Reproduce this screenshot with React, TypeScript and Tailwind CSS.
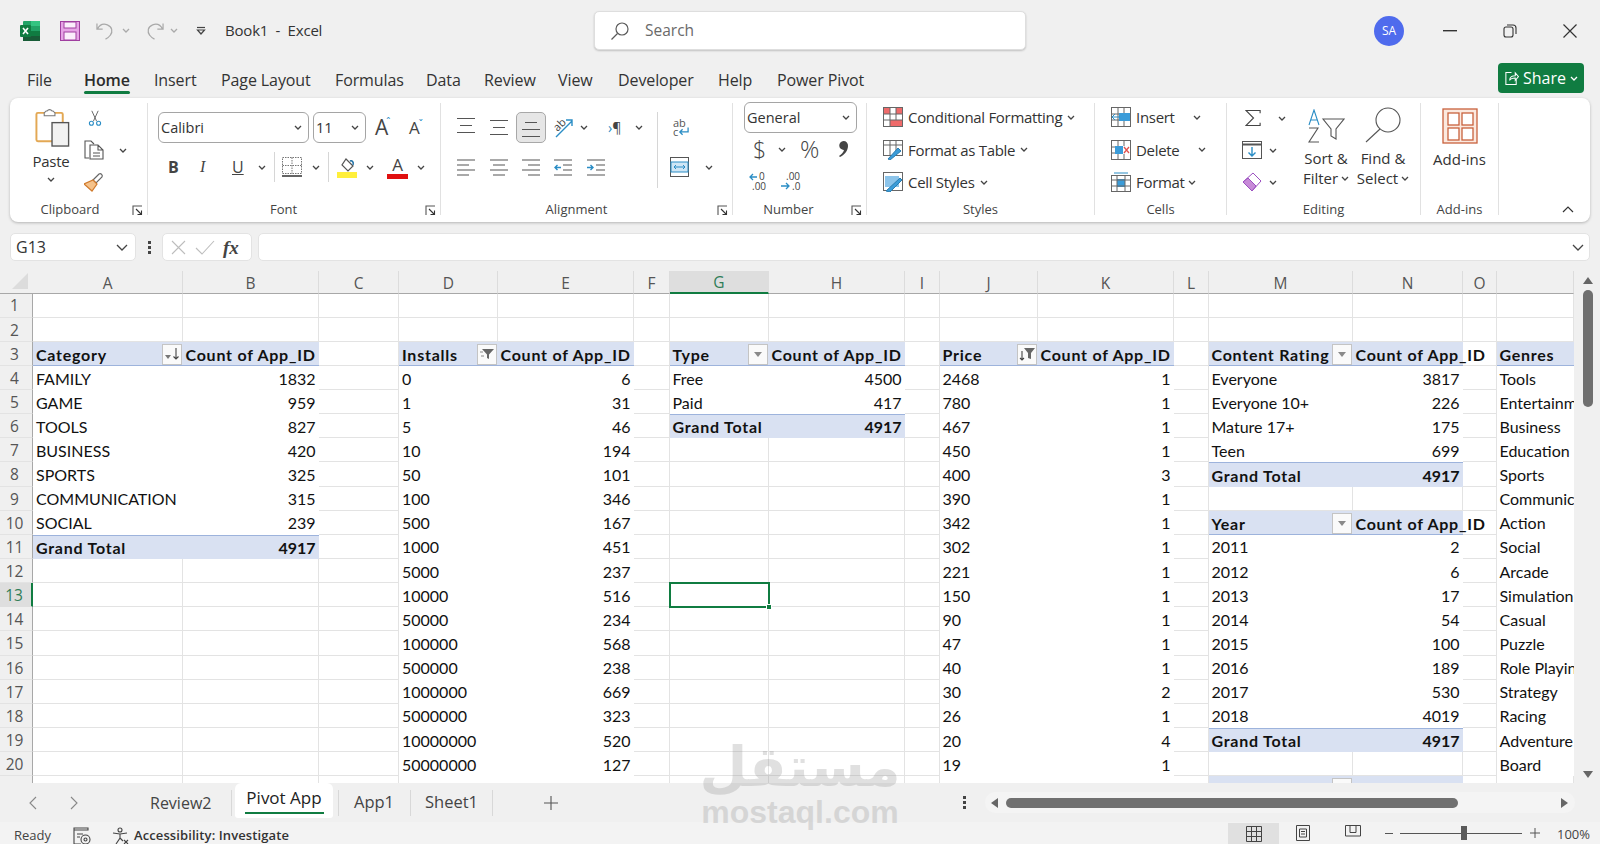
import React from "react";

const UI = "font-['Open_Sans','Noto_Sans',sans-serif]";

function Chev({ className = "" }: { className?: string }) {
  return (
    <svg viewBox="0 0 8 5" className={"w-[8px] h-[5px] shrink-0 " + className} fill="none" stroke="#444" strokeWidth="1.3">
      <path d="M1 1l3 3 3-3" />
    </svg>
  );
}

function Lines({ w = [18, 18, 18] }: { w?: number[] }) {
  return (
    <svg viewBox="0 0 18 17" className="w-[18px] h-[17px] shrink-0" stroke="#555" strokeWidth="1.2" fill="none">
      <path d={`M${(18 - w[0]) / 2} 1.5h${w[0]}M${(18 - w[1]) / 2} 8.5h${w[1]}M${(18 - w[2]) / 2} 15.5h${w[2]}`} />
    </svg>
  );
}

function AlignH({ kind }: { kind: "l" | "c" | "r" }) {
  const d =
    kind === "l"
      ? "M0 1h18M0 6h12M0 11h18M0 16h12"
      : kind === "c"
      ? "M0 1h18M3 6h12M0 11h18M3 16h12"
      : "M0 1h18M6 6h12M0 11h18M6 16h12";
  return (
    <svg viewBox="0 0 18 17" className="w-[18px] h-[17px] shrink-0" stroke="#555" strokeWidth="1.2" fill="none">
      <path d={d} />
    </svg>
  );
}

function Indent({ dir }: { dir: "l" | "r" }) {
  return (
    <svg viewBox="0 0 18 17" className="w-[18px] h-[17px] shrink-0" fill="none" strokeWidth="1.2">
      <path d="M0 1h18M9 6h9M9 11h9M0 16h18" stroke="#555" />
      <path d={dir === "l" ? "M7 8.5H1m2.5-2.5L1 8.5 3.5 11" : "M0 8.5h6M3.5 6L6 8.5 3.5 11"} stroke="#2a8dc5" strokeWidth="1.4" />
    </svg>
  );
}

function RibbonLabel({ children, pr = "", launcher = false }: { children: React.ReactNode; pr?: string; launcher?: boolean }) {
  return (
    <div className={"relative h-[26px] -mb-[8px] flex items-center justify-center text-[13px] text-[#444] " + pr}>
      {children}
      {launcher && (
        <svg viewBox="0 0 11 11" className="absolute right-[4px] top-[8px] w-[11px] h-[11px]" fill="none" stroke="#555" strokeWidth="1.1">
          <path d="M1 10V1h9" />
          <path d="M4 4l5.5 5.5M9.5 5.5v4h-4" stroke="#333" />
        </svg>
      )}
    </div>
  );
}

function Select({ w, h, text, className = "" }: { w: string; h: string; text: string; className?: string }) {
  return (
    <div className={`${w} ${h} ${className} shrink-0 border border-[#a5a5a5] rounded-[6px] bg-white flex items-center justify-between pl-[2px] pr-[6px] text-[14.5px] text-[#333]`}>
      <span>{text}</span>
      <Chev />
    </div>
  );
}

const tabsTop: [string, string][] = [
  ["File", "w-[57px]"],
  ["Home", "w-[70px]"],
  ["Insert", "w-[67px]"],
  ["Page Layout", "w-[114px]"],
  ["Formulas", "w-[91px]"],
  ["Data", "w-[58px]"],
  ["Review", "w-[74px]"],
  ["View", "w-[60px]"],
  ["Developer", "w-[100px]"],
  ["Help", "w-[59px]"],
  ["Power Pivot", "w-[100px]"],
];

function TitleBar() {
  return (
    <div className="h-[61px] flex items-center shrink-0">
      <div className="ml-[20px] w-[20px] h-[20px] relative shrink-0">
        <svg viewBox="0 0 20 20" className="w-[20px] h-[20px]">
          <rect x="3" y="0" width="17" height="20" rx="1" fill="#21a366" />
          <rect x="11" y="0" width="9" height="5" fill="#33c481" />
          <rect x="3" y="10" width="8" height="10" fill="#185c37" />
          <rect x="11" y="10" width="9" height="5" fill="#107c41" />
          <rect x="11" y="15" width="9" height="5" fill="#185c37" />
          <rect x="0" y="4" width="11" height="12" rx="1" fill="#107c41" />
          <path d="M3 7l5 6M8 7l-5 6" stroke="#fff" strokeWidth="1.6" />
        </svg>
      </div>
      <svg viewBox="0 0 20 20" className="ml-[20px] w-[20px] h-[20px] shrink-0">
        <rect x="0.5" y="0.5" width="19" height="19" fill="#e6a4e6" stroke="#a03fa0" />
        <rect x="4" y="1" width="12" height="6" fill="#fbeefb" stroke="#a03fa0" />
        <rect x="4" y="11" width="12" height="8" fill="#fbeefb" stroke="#a03fa0" />
      </svg>
      <svg viewBox="0 0 20 20" className="ml-[16px] w-[19px] h-[20px] shrink-0" fill="none" stroke="#a9a9a9" strokeWidth="1.3">
        <path d="M1 2v6h6M1.5 8C4 3 8 2 12 3.5c5 2 6 7 3 11-1 1.5-3 3-5 4" />
      </svg>
      <Chev className="ml-[7px] opacity-40" />
      <svg viewBox="0 0 20 20" className="ml-[15px] w-[19px] h-[20px] shrink-0" fill="none" stroke="#a9a9a9" strokeWidth="1.3">
        <path d="M19 2v6h-6M18.5 8C16 3 12 2 8 3.5c-5 2-6 7-3 11 1 1.5 3 3 5 4" />
      </svg>
      <Chev className="ml-[6px] opacity-40" />
      <svg viewBox="0 0 10 10" className="ml-[18px] w-[10px] h-[10px] shrink-0" fill="none" stroke="#444" strokeWidth="1.2">
        <path d="M1 1.5h8" />
        <path d="M1.5 4h7L5 8z" />
      </svg>
      <div className="ml-[19px] w-[110px] text-[15px] tracking-[-0.2px] text-[#333] whitespace-pre shrink-0">Book1  -  Excel</div>
      <div className="ml-[259px] w-[432px] h-[39px] shrink-0 bg-white rounded-[5px] border border-[#dedede] shadow-[0_1px_2px_rgba(0,0,0,0.2)] flex items-center">
        <svg viewBox="0 0 20 20" className="ml-[15px] w-[20px] h-[20px]" fill="none" stroke="#5a5a5a" strokeWidth="1.2">
          <circle cx="12" cy="8" r="6" />
          <path d="M7.5 12.5L1.5 18.5" />
        </svg>
        <span className="ml-[15px] text-[15.5px] text-[#6a6a6a]">Search</span>
      </div>
      <div className="ml-[348px] w-[30px] h-[30px] rounded-full bg-[#4f6bed] text-white text-[12px] flex items-center justify-center shrink-0">SA</div>
      <svg viewBox="0 0 14 2" className="ml-[39px] w-[14px] h-[2px] shrink-0">
        <rect width="14" height="1.4" fill="#333" />
      </svg>
      <svg viewBox="0 0 14 14" className="ml-[46px] w-[14px] h-[14px] shrink-0" fill="none" stroke="#333" strokeWidth="1.1">
        <rect x="1" y="3" width="9" height="10" rx="2" />
        <path d="M4 1h6a3 3 0 0 1 3 3v6" />
      </svg>
      <svg viewBox="0 0 14 14" className="ml-[46px] w-[14px] h-[14px] shrink-0" fill="none" stroke="#333" strokeWidth="1.2">
        <path d="M0.5 0.5l13 13M13.5 0.5l-13 13" />
      </svg>
    </div>
  );
}

function TabsBar() {
  return (
    <div className="h-[37px] flex items-center shrink-0 pl-[27px] pr-[16px]">
      {tabsTop.map(([t, w]) => (
        <div key={t} className={`${w} shrink-0 text-[16px] tracking-[-0.1px] text-[#333] whitespace-nowrap relative`}>
          {t === "Home" ? (
            <span className="relative inline-block font-semibold text-[#2b2b2b]">
              Home
              <span className="absolute left-0 right-0 -bottom-[2px] h-[2.5px] bg-[#107c41] rounded-full" />
            </span>
          ) : (
            t
          )}
        </div>
      ))}
      <div className="ml-auto w-[86px] h-[30px] -mt-[3px] rounded-[4px] bg-[#107c41] text-white text-[16px] flex items-center justify-center gap-[4px]">
        <svg viewBox="0 0 16 16" className="w-[15px] h-[15px]" fill="none" stroke="#fff" strokeWidth="1.1">
          <path d="M8 1.5H2v13h11V9" />
          <path d="M6 10c0-4 3-5 6-5V2l3.5 4L12 10V7.5c-2.5 0-5 .5-6 2.5z" />
        </svg>
        <span>Share</span>
        <svg viewBox="0 0 8 5" className="w-[8px] h-[5px]" fill="none" stroke="#fff" strokeWidth="1.3">
          <path d="M1 1l3 3 3-3" />
        </svg>
      </div>
    </div>
  );
}

function Clipboard() {
  return (
    <div className="w-[138px] h-[112px] mt-[5px] border-r border-[#e1e1e1] flex flex-col shrink-0">
      <div className="flex-1 flex pt-[5px] min-h-0">
        <div className="ml-[24px] w-[38px] flex flex-col items-center shrink-0">
          <svg viewBox="0 0 36 40" className="w-[36px] h-[39px]" fill="none">
            <rect x="1" y="5" width="27" height="29" rx="1.5" stroke="#e3a854" strokeWidth="2" fill="#fff" />
            <path d="M9 5l2-2h1a3 3 0 0 1 5 0h1l2 2v3H9z" fill="#fff" stroke="#777" strokeWidth="1.1" />
            <rect x="17" y="15" width="17" height="24" fill="#f2f2f2" stroke="#555" strokeWidth="1.4" />
          </svg>
          <span className="mt-[4px] -ml-[4px] text-[15px] tracking-[-0.3px] leading-[20px] text-[#333]">Paste</span>
          <Chev className="mt-[6px] -ml-[4px]" />
        </div>
        <div className="ml-[12px] flex flex-col">
          <svg viewBox="0 0 20 20" className="ml-[3px] w-[16px] h-[20px]" fill="none">
            <path d="M6 1l6 13M14 1L8 14" stroke="#555" strokeWidth="1.1" />
            <circle cx="5.5" cy="16.5" r="2.5" stroke="#2a8dc5" strokeWidth="1.4" />
            <circle cx="14.5" cy="16.5" r="2.5" stroke="#2a8dc5" strokeWidth="1.4" />
          </svg>
          <div className="mt-[12px] flex items-center">
            <svg viewBox="0 0 20 20" className="w-[20px] h-[20px]" fill="none" stroke="#555" strokeWidth="1.1">
              <path d="M5 18H1V1h6l3 3" />
              <path d="M6 5h8l5 5v9H6zM14 5v5h5M9 13h7M9 16h7" />
            </svg>
            <Chev className="ml-[15px]" />
          </div>
          <svg viewBox="0 0 20 20" className="mt-[12px] w-[20px] h-[20px]" fill="none">
            <path d="M9 8l6-6c2-1 4 1 3 3l-6 6z" stroke="#666" strokeWidth="1.2" />
            <path d="M9 8l4 4-5 7-8-7z" fill="#f5c28a" stroke="#d07a2c" strokeWidth="1.2" />
          </svg>
        </div>
      </div>
      <RibbonLabel pr="pr-[17px]" launcher>Clipboard</RibbonLabel>
    </div>
  );
}

function Font() {
  return (
    <div className="w-[293px] h-[112px] mt-[5px] border-r border-[#e1e1e1] flex flex-col shrink-0">
      <div className="flex-1 pt-[9px] min-h-0">
        <div className="flex items-center h-[31px]">
          <Select w="ml-[10px] w-[151px]" h="h-[31px]" text="Calibri" />
          <Select w="ml-[4px] w-[53px]" h="h-[31px]" text="11" />
          <div className="ml-[9px] w-[18px] flex items-start text-[21px] leading-none text-[#444] shrink-0">A<span className="text-[10px] text-[#2a8dc5] -ml-[2px]">ˆ</span></div>
          <div className="ml-[16px] w-[18px] flex items-start text-[17px] leading-none text-[#444] shrink-0">A<span className="text-[10px] text-[#2a8dc5] -ml-[1px]">ˇ</span></div>
        </div>
        <div className="flex items-center h-[30px] mt-[9px]">
          <span className="ml-[20px] w-[12px] text-[16px] font-bold text-[#444]">B</span>
          <span className="ml-[20px] w-[12px] text-[16px] italic font-['Liberation_Serif',serif] text-[#444]">I</span>
          <span className="ml-[20px] w-[12px] text-[16px] underline text-[#444]">U</span>
          <Chev className="ml-[14px]" />
          <div className="ml-[8px] w-px h-[30px] bg-[#d6d6d6]" />
          <svg viewBox="0 0 20 20" className="ml-[7px] w-[20px] h-[20px] shrink-0" fill="none" stroke="#777" strokeWidth="1" strokeDasharray="1.5 1">
            <path d="M.5.5h19v16H.5zM10 .5v16M.5 8.5h19" />
            <path d="M0 19h20" strokeDasharray="none" stroke="#222" strokeWidth="1.4" />
          </svg>
          <Chev className="ml-[10px]" />
          <div className="ml-[8px] w-px h-[30px] bg-[#d6d6d6]" />
          <svg viewBox="0 0 20 21" className="ml-[8px] w-[20px] h-[21px] shrink-0" fill="none">
            <path d="M9 2l7 7-5 5-6-6z" stroke="#555" strokeWidth="1.2" />
            <path d="M13 4c2-1 4 1 3 4" stroke="#1d6fa5" strokeWidth="1.5" />
            <rect x="0" y="15" width="20" height="6" fill="#ffef3b" />
          </svg>
          <Chev className="ml-[9px]" />
          <div className="ml-[13px] w-[21px] h-[24px] shrink-0 flex flex-col items-center">
            <span className="text-[17px] leading-[19px] text-[#444]">A</span>
            <span className="w-[21px] h-[5px] bg-[#e01010]" />
          </div>
          <Chev className="ml-[9px]" />
        </div>
      </div>
      <RibbonLabel pr="pr-[21px]" launcher>Font</RibbonLabel>
    </div>
  );
}

function Alignment() {
  return (
    <div className="w-[292px] h-[112px] mt-[5px] border-r border-[#e1e1e1] flex flex-col shrink-0">
      <div className="flex-1 pt-[9px] flex min-h-0">
        <div className="w-[216px] shrink-0">
          <div className="flex items-center h-[31px]">
            <div className="ml-[16px] -mt-[4px]"><Lines w={[18, 12, 18]} /></div>
            <div className="ml-[15px]"><Lines w={[18, 12, 18]} /></div>
            <div className="ml-[8px] w-[30px] h-[31px] rounded-[5px] bg-[#e6e6e6] border border-[#a8a8a8] flex items-end justify-center pb-[4px]"><Lines w={[12, 18, 18]} /></div>
            <svg viewBox="0 0 21 21" className="ml-[7px] w-[21px] h-[21px] shrink-0 overflow-visible" fill="none">
              <text x="0" y="12" fontSize="11" fill="#444" transform="rotate(-45 6 8)">ab</text>
              <path d="M3 20L19 4M13 3h6v6" stroke="#2a8dc5" strokeWidth="1.4" />
            </svg>
            <Chev className="ml-[6px]" />
            <div className="ml-[20px] w-[15px] text-[14px] leading-none flex text-[#444]"><span className="text-[#2a8dc5]">›</span><span>¶</span></div>
            <Chev className="ml-[12px]" />
          </div>
          <div className="flex items-center h-[30px] mt-[9px]">
            <div className="ml-[16px]"><AlignH kind="l" /></div>
            <div className="ml-[15px]"><AlignH kind="c" /></div>
            <div className="ml-[14px]"><AlignH kind="r" /></div>
            <div className="ml-[14px]"><Indent dir="l" /></div>
            <div className="ml-[15px]"><Indent dir="r" /></div>
          </div>
        </div>
        <div className="w-px h-[76px] bg-[#d6d6d6] shrink-0" />
        <div className="flex flex-col">
          <div className="ml-[15px] mt-[6px] w-[17px] h-[19px] relative text-[11px] leading-[9px] text-[#555]">
            <div>ab</div>
            <div className="flex items-center">c
              <svg viewBox="0 0 12 9" className="w-[11px] h-[9px]" fill="none" stroke="#2a8dc5" strokeWidth="1.4"><path d="M11 0v5H2M5 2L2 5l3 3" /></svg>
            </div>
          </div>
          <div className="flex items-center mt-[20px]">
            <svg viewBox="0 0 19 20" className="ml-[12px] w-[19px] h-[20px] shrink-0" fill="none">
              <rect x=".5" y=".5" width="18" height="19" stroke="#555" />
              <rect x="1" y="5" width="17" height="10" fill="#cfe6f5" stroke="#2a8dc5" />
              <path d="M4 10h11M6 8l-2 2 2 2M13 8l2 2-2 2" stroke="#2a8dc5" />
            </svg>
            <Chev className="ml-[16px]" />
          </div>
        </div>
      </div>
      <RibbonLabel pr="pr-[20px]" launcher>Alignment</RibbonLabel>
    </div>
  );
}

function NumberGroup() {
  return (
    <div className="w-[134px] h-[112px] mt-[5px] border-r border-[#e1e1e1] flex flex-col shrink-0">
      <div className="flex-1 min-h-0 -mt-px">
        <Select w="ml-[11px] w-[113px]" h="h-[31px]" text="General" />
        <div className="flex items-center h-[32px] text-[#444]">
          <span className="ml-[20px] w-[11px] text-[23px] font-light leading-none">$</span>
          <Chev className="ml-[14px]" />
          <span className="ml-[14px] w-[19px] text-[24px] leading-none font-light">%</span>
          <svg viewBox="0 0 11 18" className="ml-[19px] w-[11px] h-[18px] shrink-0"><path d="M5.5 1a4.5 4.5 0 0 1 4.5 5c0 5-4 9-8 11l-1-1c3-2 4.5-4 5-6a4.5 4.5 0 0 1-.5-9z" fill="#444" /></svg>
        </div>
        <div className="flex items-center mt-[6px]">
          <svg viewBox="0 0 20 20" className="ml-[16px] w-[20px] h-[20px] shrink-0 overflow-visible" fill="none">
            <path d="M8 6H1M4 3L1 6l3 3" stroke="#2a8dc5" strokeWidth="1.3" />
            <text x="10" y="9" fontSize="10" fill="#444">0</text>
            <text x="3" y="19" fontSize="10" fill="#444">.00</text>
          </svg>
          <svg viewBox="0 0 20 20" className="ml-[12px] w-[20px] h-[20px] shrink-0 overflow-visible" fill="none">
            <text x="5" y="9" fontSize="10" fill="#444">.00</text>
            <path d="M0 15h8M5 12l3 3-3 3" stroke="#2a8dc5" strokeWidth="1.3" />
            <text x="11" y="19" fontSize="10" fill="#444">.0</text>
          </svg>
        </div>
      </div>
      <RibbonLabel pr="pr-[22px]" launcher>Number</RibbonLabel>
    </div>
  );
}

function RowText({ children, cls = "" }: { children: React.ReactNode; cls?: string }) {
  return <span className={`ml-[5px] text-[15px] tracking-[-0.3px] text-[#333] whitespace-nowrap ${cls}`}>{children}</span>;
}

function Styles() {
  return (
    <div className="w-[228px] h-[112px] mt-[5px] border-r border-[#e1e1e1] flex flex-col shrink-0">
      <div className="flex-1 -mt-[2px] pl-[16px] min-h-0">
        <div className="flex items-center h-[32.5px]">
          <svg viewBox="0 0 20 20" className="w-[20px] h-[20px] shrink-0" fill="none" stroke="#666">
            <rect x=".5" y=".5" width="19" height="19" fill="#fff" />
            <rect x="1" y="1" width="6" height="6" fill="#ef6b6b" stroke="none" />
            <rect x="13" y="1" width="6" height="6" fill="#ef6b6b" stroke="none" />
            <rect x="7" y="13" width="12" height="6" fill="#ef6b6b" stroke="none" />
            <path d="M7 0v20M13 0v13M0 7h20M0 13h20" />
          </svg>
          <RowText>Conditional Formatting</RowText>
          <Chev className="ml-[5px]" />
        </div>
        <div className="flex items-center h-[32.5px]">
          <svg viewBox="0 0 20 20" className="w-[20px] h-[20px] shrink-0" fill="none" stroke="#666">
            <rect x=".5" y=".5" width="19" height="15" />
            <path d="M0 5h20M7 0v16M13 0v16" />
            <path d="M5 19l10-11 3 3L7 20z" fill="#3b9cd9" stroke="#2a7db0" />
          </svg>
          <RowText>Format as Table</RowText>
          <Chev className="ml-[5px]" />
        </div>
        <div className="flex items-center h-[32.5px]">
          <svg viewBox="0 0 20 20" className="w-[20px] h-[20px] shrink-0" fill="none" stroke="#666">
            <rect x=".5" y=".5" width="19" height="18" />
            <rect x="2" y="4" width="14" height="11" fill="#8cc4ea" stroke="none" />
            <path d="M3 19L17 6l2 2L7 20z" fill="#3b9cd9" stroke="#2a7db0" />
          </svg>
          <RowText>Cell Styles</RowText>
          <Chev className="ml-[5px]" />
        </div>
      </div>
      <RibbonLabel>Styles</RibbonLabel>
    </div>
  );
}

function Cells() {
  return (
    <div className="w-[132px] h-[112px] mt-[5px] border-r border-[#e1e1e1] flex flex-col shrink-0">
      <div className="flex-1 -mt-[2px] pl-[16px] min-h-0">
        <div className="flex items-center h-[32.5px]">
          <svg viewBox="0 0 20 20" className="w-[20px] h-[20px] shrink-0" fill="none" stroke="#666">
            <rect x=".5" y=".5" width="19" height="19" />
            <path d="M0 7h20M0 13h20M7 0v20M13 0v20" />
            <rect x="8" y="6" width="11" height="8" fill="#3b9cd9" stroke="none" />
            <path d="M9 10H1M4 7l-3 3 3 3" stroke="#2a8dc5" />
          </svg>
          <RowText cls="w-[57px]">Insert</RowText>
          <Chev />
        </div>
        <div className="flex items-center h-[32.5px]">
          <svg viewBox="0 0 20 20" className="w-[20px] h-[20px] shrink-0" fill="none" stroke="#666">
            <rect x=".5" y=".5" width="19" height="19" />
            <path d="M0 7h7M0 13h7M7 0v20M13 0v6M13 14v6" />
            <rect x="4" y="6" width="8" height="8" fill="#3b9cd9" stroke="none" />
            <path d="M13 7l5 6M18 7l-5 6" stroke="#e0524d" strokeWidth="1.3" />
          </svg>
          <RowText cls="w-[62px]">Delete</RowText>
          <Chev />
        </div>
        <div className="flex items-center h-[32.5px]">
          <svg viewBox="0 0 20 20" className="w-[20px] h-[20px] shrink-0" fill="none" stroke="#666">
            <rect x=".5" y="3.5" width="19" height="16" />
            <rect x="6" y="7" width="8" height="8" fill="#3b9cd9" stroke="none" />
            <path d="M0 8h20M0 14h20M6 3v17M14 3v17" />
            <path d="M3 1h14" stroke="#2a8dc5" />
          </svg>
          <RowText cls="w-[52px]">Format</RowText>
          <Chev />
        </div>
      </div>
      <RibbonLabel>Cells</RibbonLabel>
    </div>
  );
}

function Editing() {
  return (
    <div className="w-[194px] h-[112px] mt-[5px] border-r border-[#e1e1e1] flex flex-col shrink-0">
      <div className="flex-1 -mt-px flex min-h-0">
        <div className="w-[73px] pl-[15px] shrink-0">
          <div className="flex items-center h-[32px]">
            <svg viewBox="0 0 18 18" className="ml-[3px] w-[17px] h-[18px] shrink-0" fill="none" stroke="#444" strokeWidth="1.2">
              <path d="M16 4V1H1l8 8-8 8h15v-3" />
            </svg>
            <Chev className="ml-[16px]" />
          </div>
          <div className="flex items-center h-[32px]">
            <svg viewBox="0 0 20 18" className="w-[20px] h-[18px] shrink-0" fill="none" stroke="#555">
              <rect x=".5" y=".5" width="19" height="17" />
              <path d="M0 3.5h20" strokeWidth="2" />
              <path d="M10 6v9M6.5 11.5L10 15l3.5-3.5" stroke="#2a8dc5" strokeWidth="1.4" />
            </svg>
            <Chev className="ml-[7px]" />
          </div>
          <div className="flex items-center h-[32px]">
            <svg viewBox="0 0 20 20" className="w-[20px] h-[20px] shrink-0" fill="none">
              <path d="M11 1l8 8-9 10-9-9z" fill="#fff" stroke="#9b4fc0" />
              <path d="M6 6l8 8-4 5-9-9z" fill="#c78ad8" stroke="#9b4fc0" />
            </svg>
            <Chev className="ml-[7px]" />
          </div>
        </div>
        <div className="w-[52px] flex flex-col items-center shrink-0 pt-[7px]">
          <svg viewBox="0 0 38 34" className="w-[38px] h-[34px]" fill="none">
            <path d="M2 16L7 1l5 15M3.5 11h7" stroke="#2a8dc5" strokeWidth="1.1" />
            <path d="M2 19h9L2 33h10" stroke="#555" strokeWidth="1.1" />
            <path d="M16 10h21l-8 10v10l-5-3v-7z" stroke="#555" strokeWidth="1.1" />
          </svg>
          <span className="text-[15px] leading-[20px] text-[#333] mt-[5px] whitespace-nowrap">Sort &amp;</span>
          <span className="text-[15px] leading-[20px] text-[#333] flex items-center whitespace-nowrap">Filter<Chev className="ml-[3px]" /></span>
        </div>
        <div className="ml-[4px] w-[54px] flex flex-col items-center shrink-0 pt-[5px]">
          <svg viewBox="0 0 36 36" className="w-[36px] h-[36px]" fill="none" stroke="#555" strokeWidth="1.1">
            <circle cx="23" cy="13" r="12" />
            <path d="M15 22L1 35" />
          </svg>
          <span className="text-[15px] leading-[20px] text-[#333] mt-[5px] whitespace-nowrap">Find &amp;</span>
          <span className="text-[15px] leading-[20px] text-[#333] flex items-center whitespace-nowrap">Select<Chev className="ml-[3px]" /></span>
        </div>
      </div>
      <RibbonLabel>Editing</RibbonLabel>
    </div>
  );
}

function AddIns() {
  return (
    <div className="w-[78px] h-[112px] mt-[5px] border-r border-[#e1e1e1] flex flex-col shrink-0">
      <div className="flex-1 pt-[5px] flex flex-col items-center min-h-0">
        <svg viewBox="0 0 36 36" className="w-[36px] h-[36px]" fill="none" stroke="#c8613c" strokeWidth="1.3">
          <rect x="1" y="1" width="34" height="34" fill="#fbe9df" />
          <rect x="6" y="5" width="11" height="12" fill="#fff" />
          <rect x="20" y="5" width="11" height="12" fill="#fff" />
          <rect x="6" y="20" width="11" height="12" fill="#fff" />
          <rect x="20" y="20" width="11" height="12" fill="#fff" />
        </svg>
        <span className="text-[15px] leading-[20px] text-[#333] mt-[5px]">Add-ins</span>
      </div>
      <RibbonLabel>Add-ins</RibbonLabel>
    </div>
  );
}

function Ribbon() {
  return (
    <div className="relative h-[124px] mx-[10px] rounded-[8px] bg-white shadow-[0_1px_3px_rgba(0,0,0,0.25)] flex shrink-0">
      <Clipboard />
      <Font />
      <Alignment />
      <NumberGroup />
      <Styles />
      <Cells />
      <Editing />
      <AddIns />
      <svg viewBox="0 0 12 7" className="absolute right-[16px] bottom-[9px] w-[12px] h-[7px]" fill="none" stroke="#333" strokeWidth="1.2">
        <path d="M1 6l5-5 5 5" />
      </svg>
    </div>
  );
}

function FormulaBar() {
  return (
    <div className="h-[28px] mt-[11px] flex items-center pl-[10px] pr-[10px] shrink-0">
      <div className="w-[126px] h-[28px] bg-white rounded-[5px] border border-[#e3e3e3] flex items-center justify-between pl-[5px] pr-[7px] text-[16px] text-[#333]">
        <span>G13</span>
        <svg viewBox="0 0 12 7" className="w-[12px] h-[7px]" fill="none" stroke="#444" strokeWidth="1.3"><path d="M1 1l5 5 5-5" /></svg>
      </div>
      <svg viewBox="0 0 3 13" className="ml-[12px] w-[3px] h-[13px] shrink-0" fill="#444">
        <rect width="3" height="3" y="0" /><rect width="3" height="3" y="5" /><rect width="3" height="3" y="10" />
      </svg>
      <div className="ml-[11px] w-[90px] h-[28px] bg-white rounded-[5px] border border-[#e3e3e3] flex items-center shrink-0">
        <svg viewBox="0 0 15 15" className="ml-[8px] w-[15px] h-[15px]" fill="none" stroke="#bdbdbd" strokeWidth="1.1"><path d="M1 1l13 13M14 1L1 14" /></svg>
        <svg viewBox="0 0 20 15" className="ml-[9px] w-[20px] h-[15px]" fill="none" stroke="#bdbdbd" strokeWidth="1.1"><path d="M1 8l6 6L19 1" /></svg>
        <span className="ml-[8px] text-[19px] italic font-bold font-['Liberation_Serif',serif] text-[#444] leading-none">fx</span>
      </div>
      <div className="ml-[6px] flex-1 h-[28px] bg-white rounded-[5px] border border-[#e3e3e3] flex items-center justify-end pr-[5px]">
        <svg viewBox="0 0 12 7" className="w-[12px] h-[7px]" fill="none" stroke="#444" strokeWidth="1.3"><path d="M1 1l5 5 5-5" /></svg>
      </div>
    </div>
  );
}

type Kind = "head" | "body" | "total";
type Cell = { t?: string; k: Kind; right?: boolean; btn?: "sort" | "filter" | "drop" | "fs" };
const cells: Record<string, Cell> = {};

function pivot(l: string, r: string, start: number, head: string, btn: Cell["btn"], rows: [string, string][], total = true, countHead = "Count of App_ID") {
  cells[l + start] = { t: head, k: "head", btn };
  cells[r + start] = { t: countHead, k: "head" };
  rows.forEach((x, i) => {
    const row = start + 1 + i;
    const isTotal = total && i === rows.length - 1;
    cells[l + row] = { t: x[0], k: isTotal ? "total" : "body" };
    cells[r + row] = { t: x[1], k: isTotal ? "total" : "body", right: true };
  });
}

pivot("A", "B", 3, "Category", "sort", [["FAMILY", "1832"], ["GAME", "959"], ["TOOLS", "827"], ["BUSINESS", "420"], ["SPORTS", "325"], ["COMMUNICATION", "315"], ["SOCIAL", "239"], ["Grand Total", "4917"]]);
pivot("D", "E", 3, "Installs", "filter", [["0", "6"], ["1", "31"], ["5", "46"], ["10", "194"], ["50", "101"], ["100", "346"], ["500", "167"], ["1000", "451"], ["5000", "237"], ["10000", "516"], ["50000", "234"], ["100000", "568"], ["500000", "238"], ["1000000", "669"], ["5000000", "323"], ["10000000", "520"], ["50000000", "127"], ["", ""]], false);
pivot("G", "H", 3, "Type", "drop", [["Free", "4500"], ["Paid", "417"], ["Grand Total", "4917"]]);
pivot("J", "K", 3, "Price", "fs", [["2468", "1"], ["780", "1"], ["467", "1"], ["450", "1"], ["400", "3"], ["390", "1"], ["342", "1"], ["302", "1"], ["221", "1"], ["150", "1"], ["90", "1"], ["47", "1"], ["40", "1"], ["30", "2"], ["26", "1"], ["20", "4"], ["19", "1"], ["", ""]], false);
pivot("M", "N", 3, "Content Rating", "drop", [["Everyone", "3817"], ["Everyone 10+", "226"], ["Mature 17+", "175"], ["Teen", "699"], ["Grand Total", "4917"]]);
pivot("M", "N", 10, "Year", "drop", [["2011", "2"], ["2012", "6"], ["2013", "17"], ["2014", "54"], ["2015", "100"], ["2016", "189"], ["2017", "530"], ["2018", "4019"], ["Grand Total", "4917"]]);
cells["M21"] = { k: "head", btn: "drop" };
cells["N21"] = { k: "head" };
cells["P3"] = { t: "Genres", k: "head" };
["Tools", "Entertainment", "Business", "Education", "Sports", "Communication", "Action", "Social", "Arcade", "Simulation", "Casual", "Puzzle", "Role Playing", "Strategy", "Racing", "Adventure", "Board"].forEach((t, i) => {
  cells["P" + (4 + i)] = { t, k: "body" };
});

const COLS = "ABCDEFGHIJKLMNOP".split("");

function FilterBtn({ kind }: { kind: NonNullable<Cell["btn"]> }) {
  return (
    <div className="absolute right-[1px] top-[2px] w-[20px] h-[21px] border border-[#c4c4c4] bg-[#fafafa] flex items-center justify-center z-10">
      {kind === "drop" && (
        <svg viewBox="0 0 8 5" className="w-[8px] h-[5px]"><path d="M0 0h8L4 5z" fill="#8a8a8a" /></svg>
      )}
      {kind === "sort" && (
        <svg viewBox="0 0 16 14" className="w-[16px] h-[14px]" fill="none">
          <path d="M1 8h6L4 12z" fill="#777" />
          <path d="M12 1v11M9.5 9.5L12 12l2.5-2.5" stroke="#444" strokeWidth="1.1" />
        </svg>
      )}
      {kind === "filter" && (
        <svg viewBox="0 0 14 12" className="w-[14px] h-[12px]"><path d="M2 1h12L9 6.5V11L7 10V6.5z" fill="#666" /><path d="M0 4h3M1 8h3" stroke="#888" /></svg>
      )}
      {kind === "fs" && (
        <svg viewBox="0 0 16 14" className="w-[16px] h-[14px]" fill="none">
          <path d="M5 1h11L12 6v6L9 11V6z" fill="#666" />
          <path d="M3 4v9M1 11l2 2 2-2" stroke="#444" strokeWidth="1.1" />
        </svg>
      )}
    </div>
  );
}

function CellView({ id }: { id: string }) {
  const c = cells[id];
  if (id === "G13") {
    return (
      <div className="relative bg-white -m-px border-2 border-[#107c41] z-20">
        <span className="absolute -right-[4px] -bottom-[4px] w-[6px] h-[6px] bg-[#107c41] border border-white" />
      </div>
    );
  }
  if (!c) return <div className="bg-white border-r border-b border-[#e3e3e3]" />;
  const bg =
    c.k === "head"
      ? "bg-[#d9e1f2] border-b border-[#9db3dc] font-bold pt-[3px]"
      : c.k === "total"
      ? "bg-[#d9e1f2] border-t border-[#9db3dc] font-bold pt-[1px]"
      : "bg-white pt-[1px]";
  const spacing = !c.right && c.k !== "body" ? "tracking-[0.75px]" : "";
  return (
    <div className={`relative flex items-center whitespace-nowrap px-[3px] text-[16px] text-[#111] ${bg} ${spacing} ${c.right ? "justify-end" : ""}`}>
      <span className="relative z-10">{c.t}</span>
      {c.btn && <FilterBtn kind={c.btn} />}
    </div>
  );
}

function Sheet() {
  const rows = Array.from({ length: 21 }, (_, i) => i + 1);
  return (
    <div className="h-[512px] mt-[10px] flex shrink-0">
      <div className="w-[1574px] h-[512px] overflow-hidden shrink-0 font-['Lato','Liberation_Sans',sans-serif]">
        <div className="grid w-[1574px] grid-cols-[33px_149.5px_136px_80.5px_98.5px_136px_36px_99px_136px_35px_98px_136px_35px_144px_110px_34px_77px] grid-rows-[22.5px] auto-rows-[24.15px]">
          <div className={`bg-[#f0f0f0] border-b border-[#a8a8a8] flex items-end justify-end pr-[3px] pb-[4px] ${UI}`}>
            <svg viewBox="0 0 20 20" className="w-[20px] h-[16px]"><path d="M20 0v20H0z" fill="#dcdcdc" /></svg>
          </div>
          {COLS.map((c) => (
            <div
              key={c}
              className={`${UI} flex items-center justify-center pt-[3px] pl-[1px] text-[15.5px] border-r ${
                c === "G" ? "bg-[#dedede] text-[#2f7d57] border-b-2 border-b-[#107c41] border-r-[#dedede]" : "bg-[#f0f0f0] text-[#555] border-b border-b-[#a8a8a8] border-r-[#dcdcdc]"
              }`}
            >
              {c === "P" ? "" : c}
            </div>
          ))}
          {rows.map((r) => (
            <React.Fragment key={r}>
              <div
                className={`${UI} flex items-center justify-center pr-[3px] pt-[2px] text-[15.5px] border-r border-b ${
                  r === 13 ? "bg-[#dedede] text-[#2f7d57] border-r-[#107c41] border-r-2 border-b-[#dedede]" : "bg-[#f0f0f0] text-[#555] border-r-[#a8a8a8] border-b-[#e3e3e3]"
                }`}
              >
                {r === 21 ? "" : r}
              </div>
              {COLS.map((c) => (
                <CellView key={c + r} id={c + r} />
              ))}
            </React.Fragment>
          ))}
        </div>
      </div>
      <div className="flex-1 flex flex-col items-center pt-[6px] pb-[5px]">
        <svg viewBox="0 0 10 7" className="w-[10px] h-[7px] ml-[1px]"><path d="M5 0l5 7H0z" fill="#666" /></svg>
        <div className="mt-[6px] ml-[1px] w-[10px] h-[117px] rounded-full bg-[#6f6f6f]" />
        <div className="flex-1" />
        <svg viewBox="0 0 10 7" className="w-[10px] h-[7px] ml-[1px]"><path d="M0 0h10L5 7z" fill="#666" /></svg>
      </div>
    </div>
  );
}

function SheetTabs() {
  const Sep = ({ c }: { c: string }) => <div className={`w-px h-[26px] bg-[#d8d8d8] shrink-0 ${c}`} />;
  return (
    <div className="h-[39px] flex items-center shrink-0 bg-[#f0f0f0]">
      <svg viewBox="0 0 8 14" className="ml-[29px] w-[8px] h-[14px] shrink-0" fill="none" stroke="#888" strokeWidth="1.1"><path d="M7 1L1 7l6 6" /></svg>
      <svg viewBox="0 0 8 14" className="ml-[33px] w-[8px] h-[14px] shrink-0" fill="none" stroke="#888" strokeWidth="1.1"><path d="M1 1l6 6-6 6" /></svg>
      <span className="ml-[72px] w-[66px] text-[16px] text-[#444] shrink-0 whitespace-nowrap">Review2</span>
      <Sep c="ml-[15px]" />
      <div className="ml-[3px] w-[98px] h-[35px] self-start bg-white rounded-t-[6px] rounded-b-[3px] flex flex-col items-center shrink-0 pt-[4px]">
        <span className="text-[17px] font-medium leading-[22px] text-[#222] whitespace-nowrap">Pivot App</span>
        <span className="w-[79px] h-[2px] mt-[3px] bg-[#107c41]" />
      </div>
      <Sep c="ml-[5px]" />
      <span className="ml-[15px] w-[41px] text-[16.5px] text-[#444] shrink-0">App1</span>
      <Sep c="ml-[15px]" />
      <span className="ml-[14px] w-[52px] text-[16.5px] text-[#444] shrink-0">Sheet1</span>
      <Sep c="ml-[15px]" />
      <svg viewBox="0 0 14 14" className="ml-[51px] w-[14px] h-[14px] shrink-0" fill="none" stroke="#555" strokeWidth="1.1"><path d="M7 0v14M0 7h14" /></svg>
      <svg viewBox="0 0 3 13" className="ml-[405px] w-[3px] h-[13px] shrink-0" fill="#444">
        <rect width="3" height="3" y="0" /><rect width="3" height="3" y="5" /><rect width="3" height="3" y="10" />
      </svg>
      <div className="ml-[19px] w-[590px] h-[21px] rounded-full bg-[#f4f4f4] flex items-center shrink-0">
        <svg viewBox="0 0 7 10" className="ml-[6px] w-[7px] h-[10px] shrink-0"><path d="M7 0v10L0 5z" fill="#666" /></svg>
        <div className="ml-[8px] w-[452px] h-[10px] rounded-full bg-[#707070]" />
        <div className="flex-1" />
        <svg viewBox="0 0 7 10" className="mr-[7px] w-[7px] h-[10px] shrink-0"><path d="M0 0l7 5-7 5z" fill="#666" /></svg>
      </div>
    </div>
  );
}

function StatusBar() {
  return (
    <div className="h-[22px] flex items-center bg-[#f3f3f3] text-[13px] text-[#444] shrink-0">
      <span className="ml-[14px] w-[36px] pt-[5px]">Ready</span>
      <svg viewBox="0 0 18 18" className="ml-[23px] w-[18px] h-[18px] mt-[5px] shrink-0" fill="none" stroke="#444" strokeWidth="1.1">
        <path d="M1 1h14v2H1zM1 3v14h7M4 7h6M4 10h3" />
        <circle cx="12.5" cy="12.5" r="4.5" />
        <circle cx="12.5" cy="12.5" r="1.5" />
      </svg>
      <svg viewBox="0 0 18 18" className="ml-[21px] w-[18px] h-[18px] mt-[5px] shrink-0" fill="none" stroke="#444" strokeWidth="1.1">
        <circle cx="8" cy="3" r="2" />
        <path d="M1 6l7 1 7-1M8 7v4l-4 6M8 11l3 3M12 13l4 4M16 13l-4 4" />
      </svg>
      <span className="ml-[4px] pt-[5px] font-semibold tracking-[0.1px] text-[#333] whitespace-nowrap">Accessibility: Investigate</span>
      <div className="flex-1" />
      <div className="w-[51px] h-[21px] mt-[1px] bg-[#e0e0e0] flex items-center justify-center shrink-0">
        <svg viewBox="0 0 16 16" className="w-[16px] h-[16px]" fill="none" stroke="#444"><path d="M.5.5h15v15H.5zM5.5 0v16M10.5 0v16M0 5.5h16M0 10.5h16" /></svg>
      </div>
      <svg viewBox="0 0 16 16" className="ml-[16px] w-[16px] h-[16px] shrink-0" fill="none" stroke="#444"><path d="M1.5.5h13v15h-13z" /><path d="M4.5 4h7v8h-7zM6 6.5h4M6 9h4" /></svg>
      <svg viewBox="0 0 16 16" className="ml-[34px] w-[16px] h-[16px] shrink-0" fill="none" stroke="#444"><path d="M.5 11V.5h15V11M.5 11h15M5 .5v7h6v-7" /></svg>
      <span className="ml-[24px] w-[8px] h-px bg-[#555] shrink-0" />
      <div className="ml-[7px] w-[122px] h-[14px] relative flex items-center shrink-0">
        <div className="w-full h-px bg-[#555]" />
        <div className="absolute left-[61px] top-0 w-[6px] h-[14px] bg-[#5a5a5a]" />
      </div>
      <svg viewBox="0 0 10 10" className="ml-[8px] w-[10px] h-[10px] shrink-0" fill="none" stroke="#555"><path d="M5 0v10M0 5h10" /></svg>
      <span className="ml-[17px] mr-[9px] pt-[3px] w-[34px] whitespace-nowrap">100%</span>
    </div>
  );
}

export default function App() {
  return (
    <div className={`relative w-[1600px] h-[844px] overflow-hidden bg-[#f0f0f0] flex flex-col ${UI}`}>
      <TitleBar />
      <TabsBar />
      <Ribbon />
      <FormulaBar />
      <Sheet />
      <SheetTabs />
      <StatusBar />
      <div className="absolute left-[702px] top-[737px] w-[196px] flex flex-col items-center opacity-[0.3] pointer-events-none z-30 text-[#9a9a9a]">
        <span className="text-[55px] leading-[60px] font-bold font-['DejaVu_Sans',sans-serif]" dir="rtl">مستقل</span>
        <span className="text-[32px] leading-[30px] font-bold font-['Liberation_Sans',sans-serif]">mostaql.com</span>
      </div>
    </div>
  );
}
